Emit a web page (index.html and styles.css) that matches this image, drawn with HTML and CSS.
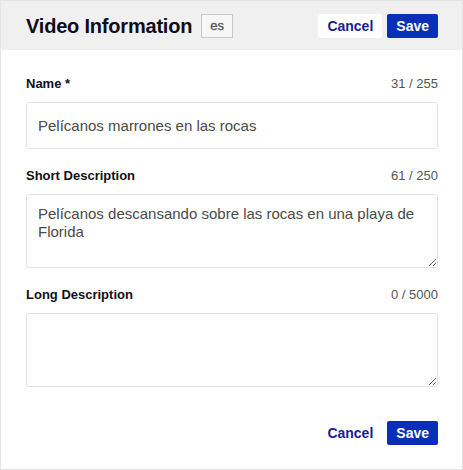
FILE: index.html
```html
<!DOCTYPE html>
<html lang="en">
<head>
<meta charset="utf-8">
<title>Video Information</title>
<link rel="stylesheet" href="styles.css">
</head>
<body>
<div class="panel">
  <header class="panel-header">
    <div class="title-group">
      <h1 class="title">Video Information</h1>
      <span class="lang-badge">es</span>
    </div>
    <div class="actions">
      <button class="btn btn-cancel">Cancel</button>
      <button class="btn btn-save">Save</button>
    </div>
  </header>
  <form class="panel-body">
    <div class="field">
      <div class="field-head">
        <label class="field-label" for="name">Name *</label>
        <span class="counter">31 / 255</span>
      </div>
      <input class="text-input" id="name" type="text" value="Pelícanos marrones en las rocas">
    </div>
    <div class="field">
      <div class="field-head">
        <label class="field-label" for="short">Short Description</label>
        <span class="counter">61 / 250</span>
      </div>
      <textarea class="text-area" id="short">Pelícanos descansando sobre las rocas en una playa de Florida</textarea>
    </div>
    <div class="field">
      <div class="field-head">
        <label class="field-label" for="long">Long Description</label>
        <span class="counter">0 / 5000</span>
      </div>
      <textarea class="text-area" id="long"></textarea>
    </div>
    <div class="footer-actions">
      <button type="button" class="btn btn-cancel btn-plain">Cancel</button>
      <button type="button" class="btn btn-save">Save</button>
    </div>
  </form>
</div>
</body>
</html>
```

FILE: styles.css
```css
* {
  box-sizing: border-box;
}

html, body {
  margin: 0;
  padding: 0;
  background: #ffffff;
}

body {
  font-family: "Liberation Sans", Arial, sans-serif;
  color: #111118;
}

.panel {
  width: 463px;
  height: 470px;
  border: 1px solid #e4e4e4;
  display: flex;
  flex-direction: column;
}

.panel-header {
  height: 49px;
  background: #f0f0f0;
  display: flex;
  align-items: center;
  justify-content: space-between;
  padding: 0 24px 0 25px;
}

.title-group {
  display: flex;
  align-items: center;
}

.title {
  margin: 0;
  font-size: 20px;
  font-weight: 700;
  letter-spacing: -0.2px;
  color: #0e0e1a;
  line-height: 24px;
}

.lang-badge {
  margin-left: 9px;
  height: 24px;
  line-height: 22px;
  padding: 0 8px;
  border: 1px solid #c9c9c9;
  background: #f7f7f7;
  color: #555555;
  font-size: 13px;
  font-weight: 400;
  -webkit-text-stroke: 0.3px #555555;
}

.actions {
  display: flex;
  gap: 5px;
}

.btn {
  font-family: "Liberation Sans", Arial, sans-serif;
  font-size: 14px;
  font-weight: 700;
  height: 24px;
  line-height: 24px;
  padding: 0 9px;
  border: 0;
  border-radius: 2px;
  cursor: pointer;
}

.btn-cancel {
  background: #ffffff;
  color: #1c1c8e;
}

.btn-plain {
  background: transparent;
}

.btn-save {
  background: #0a2eb8;
  color: #ffffff;
}

.panel-body {
  padding: 26px 24px 0 25px;
  display: flex;
  flex-direction: column;
  margin: 0;
}

.field {
  display: flex;
  flex-direction: column;
  margin-bottom: 19px;
}

.field-head {
  display: flex;
  justify-content: space-between;
  align-items: center;
  height: 16px;
  margin-bottom: 10px;
}

.field-label {
  font-size: 13px;
  font-weight: 700;
  line-height: 16px;
  color: #111118;
}

.counter {
  font-size: 13px;
  line-height: 16px;
  color: #555555;
}

.text-input {
  height: 47px;
  width: 100%;
  border: 1px solid #e2e2e2;
  border-radius: 3px;
  padding: 0 11px;
  font-family: "Liberation Sans", Arial, sans-serif;
  font-size: 15px;
  color: #4a4a4a;
  background: #ffffff;
  outline: none;
}

.text-area {
  display: block;
  height: 74px;
  width: 100%;
  border: 1px solid #e2e2e2;
  border-radius: 3px;
  padding: 10px 11px;
  font-family: "Liberation Sans", Arial, sans-serif;
  font-size: 15px;
  line-height: 18px;
  color: #4a4a4a;
  background: #ffffff;
  outline: none;
  resize: vertical;
  margin: 0;
}

.footer-actions {
  display: flex;
  justify-content: flex-end;
  gap: 5px;
  margin-top: 15px;
}
```
